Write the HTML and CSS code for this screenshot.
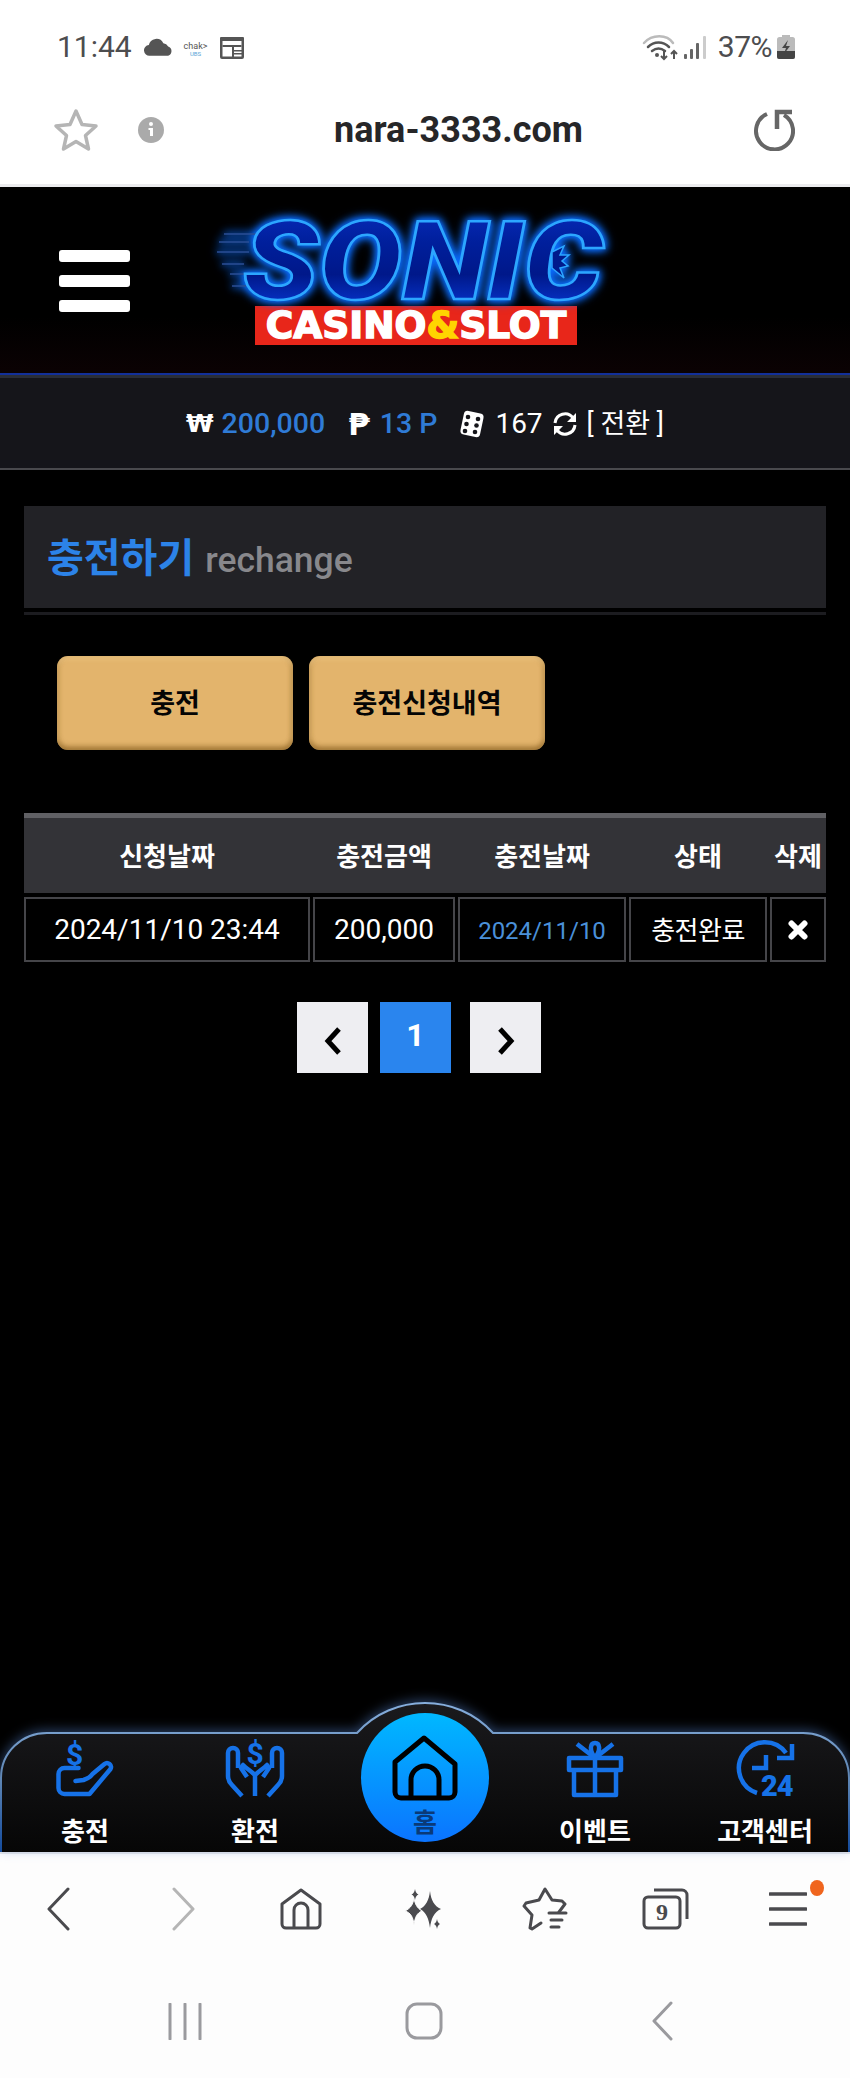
FILE: index.html
```html
<!DOCTYPE html>
<html lang="ko">
<head>
<meta charset="utf-8">
<title>충전하기</title>
<link rel="stylesheet" href="styles.css">
</head>
<body>
<div class="phone">
  <div class="status">
    <div class="status-left">
      <span class="clock">11:44</span>
      <svg class="ic-cloud" viewBox="0 0 30 18"><path d="M6 18a5.5 5.5 0 0 1-1-11 8 8 0 0 1 15-2 6.5 6.5 0 0 1 5 3.500 5 5 0 0 1 0 9.500z" fill="#555"/></svg>
      <span class="chak"><span class="chak-a">chak&gt;</span><span class="chak-b">UBS</span></span>
      <svg class="ic-cal" viewBox="0 0 26 24"><path d="M2 2h22a1 1 0 0 1 1 1v19a2 2 0 0 1-2 2H3a2 2 0 0 1-2-2V3a1 1 0 0 1 1-1z" fill="#555"/><rect x="3.500" y="6" width="19" height="15.500" fill="#fff"/><rect x="3.500" y="10" width="19" height="2" fill="#555"/><rect x="13" y="11" width="2" height="11" fill="#555"/><rect x="15" y="15" width="8" height="1.500" fill="#555"/><rect x="15" y="18" width="8" height="1.500" fill="#555"/></svg>
    </div>
    <div class="status-right">
      <svg class="ic-wifi" viewBox="0 0 36 27"><g fill="none" stroke-linecap="round"><path d="M2 9C10 0 25 0 31 9" stroke="#bbb" stroke-width="2.500"/><path d="M6 13c6-6 15-6 21 0" stroke="#555" stroke-width="2.500"/><path d="M10 17c4-3 9-3 13 0" stroke="#555" stroke-width="2.500"/></g><circle cx="15" cy="21" r="2" fill="#555"/><path d="M22 16v9m-3-3 3 3 3-3M32 25v-8m-3 3 3-3 3 3" fill="none" stroke="#555" stroke-width="2"/></svg>
      <svg class="ic-signal" viewBox="0 0 22 23"><g fill="#666"><rect x="0" y="18" width="3" height="5" rx="1"/><rect x="6" y="13" width="3" height="10" rx="1"/><rect x="12" y="7" width="3" height="16" rx="1"/></g><rect x="19" y="0" width="3" height="23" rx="1" fill="#ccc"/></svg>
      <span class="pct">37%</span>
      <svg class="ic-batt" viewBox="0 0 18 24"><rect x="5" y="0" width="8" height="3" fill="#bbb"/><rect x="0" y="2" width="18" height="22" rx="2.500" fill="#bbb"/><path d="M0 16h18v6a2 2 0 0 1-2 2H2a2 2 0 0 1-2-2z" fill="#444"/><path d="M11 5 5 13h4l-2 6 6-8H9z" fill="#444"/></svg>
    </div>
  </div>

  <div class="address">
    <svg class="ic-star" viewBox="0 0 46 44"><path d="M23 3l6 13.500 14 1.500-10.500 9.500L35.500 41 23 33.500 10.500 41l3-13.500L3 18l14-1.500z" fill="none" stroke="#b5b5b5" stroke-width="3.500" stroke-linejoin="round"/></svg>
    <svg class="ic-info" viewBox="0 0 26 26"><circle cx="13" cy="13" r="13" fill="#aaa"/><circle cx="13" cy="7" r="2" fill="#fff"/><path d="M10.500 11H15v8h-3v-6h-1.500z" fill="#fff"/></svg>
    <span class="url">nara-3333.com</span>
    <svg class="ic-reload" viewBox="0 0 42 42"><path d="M14 5A18.500 18.500 0 1 0 31 6" fill="none" stroke="#666" stroke-width="4"/><path d="M24 20V3h15" fill="none" stroke="#666" stroke-width="4.500"/></svg>
  </div>

  <header class="site-header">
    <button class="burger" aria-label="메뉴"><span></span><span></span><span></span></button>
    <div class="logo">
      <svg class="logo-art" viewBox="0 0 400 100">
        <defs>
          <linearGradient id="logoFill" x1="0" y1="0" x2="0" y2="1">
            <stop offset="0" stop-color="#0a2fc4"/><stop offset=".35" stop-color="#001f9c"/><stop offset=".6" stop-color="#00188a"/><stop offset="1" stop-color="#0a44f0"/>
          </linearGradient>
        </defs>
        <g stroke="#2b4f96" stroke-width="1.500"><path d="M14 28h32M9 36h30M7 46h32M12 58h22M20 68h16M22 80h14"/></g>
        <text class="logo-sonic" x="33" y="93" textLength="360" lengthAdjust="spacingAndGlyphs" fill="url(#logoFill)" stroke="#2ca6ff" stroke-width="2.500">SONIC</text>
        <path d="M342 46l12-6-4 9 9 0-7 6 6 5-8 2 4 10-12-10z" fill="#001a8c" stroke="#2ca6ff" stroke-width="1.500"/>
      </svg>
      <div class="logo-band">CASINO<span class="amp">&amp;</span>SLOT</div>
    </div>
  </header>

  <div class="balance">
    <span class="sym">₩</span><span class="money b1">200,000</span>
    <span class="sym s2">₱</span><span class="money b2">13 P</span>
    <svg class="ic-dice" viewBox="0 0 26 28"><rect x="3" y="2" width="20" height="24" rx="4" transform="rotate(12 13 14)" fill="#fff"/><g fill="#15151a"><circle cx="9" cy="7" r="2.300"/><circle cx="7.500" cy="14" r="2.300"/><circle cx="6" cy="21" r="2.300"/><circle cx="19" cy="9" r="2.300"/><circle cx="17.500" cy="15.500" r="2.300"/><circle cx="16" cy="22" r="2.300"/></g></svg>
    <span class="plain">167</span>
    <svg class="ic-sync" viewBox="0 0 26 26"><g fill="none" stroke="#fff" stroke-width="3"><path d="M3 12a10 10 0 0 1 18-5"/><path d="M23 14a10 10 0 0 1-18 5"/></g><path d="M24 2v9h-9zM2 24v-9h9z" fill="#fff"/></svg>
    <span class="plain conv">[ 전환 ]</span>
  </div>

  <main class="content">
    <div class="title-box">
      <h1 class="title">충전하기 <span class="title-sub">rechange</span></h1>
    </div>
    <div class="tabs">
      <button class="tab">충전</button>
      <button class="tab">충전신청내역</button>
    </div>
    <div class="table">
      <div class="thead">
        <span>신청날짜</span><span>충전금액</span><span>충전날짜</span><span>상태</span><span>삭제</span>
      </div>
      <div class="tbody">
        <span class="cell">2024/11/10 23:44</span>
        <span class="cell">200,000</span>
        <span class="cell date">2024/11/10</span>
        <span class="cell status-cell">충전완료</span>
        <span class="cell"><svg class="ic-x" viewBox="0 0 20 20"><path d="M3.500 3.500l13 13m0-13l-13 13" stroke="#fff" stroke-width="6" stroke-linecap="round"/></svg></span>
      </div>
    </div>
    <div class="pager">
      <button class="page"><svg class="ic-chev" viewBox="0 0 20 30"><path d="M16 3 5 15l11 12" fill="none" stroke="#000" stroke-width="5"/></svg></button>
      <button class="page on">1</button>
      <button class="page next"><svg class="ic-chev" viewBox="0 0 20 30"><path d="M4 3l11 12L4 27" fill="none" stroke="#000" stroke-width="5"/></svg></button>
    </div>
  </main>

  <nav class="dock">
    <svg class="dock-bg" viewBox="0 0 850 150">
      <defs>
        <linearGradient id="dockFill" x1="0" y1="0" x2="0" y2="1"><stop offset="0" stop-color="#1a1a1d"/><stop offset="1" stop-color="#060606"/></linearGradient>
        <linearGradient id="dockLine" x1="0" y1="0" x2="0" y2="1"><stop offset="0" stop-color="#86aedc"/><stop offset=".5" stop-color="#5f86b4"/><stop offset="1" stop-color="#134a9c"/></linearGradient>
      </defs>
      <path d="M1 150V76C1 50 22 31 47 31H357C375 11 400 1 425 1S475 11 493 31H803C828 31 849 50 849 76V150Z" fill="url(#dockFill)"/>
      <path d="M1 150V76C1 50 22 31 47 31H357C375 11 400 1 425 1S475 11 493 31H803C828 31 849 50 849 76V150" fill="none" stroke="url(#dockLine)" stroke-width="2"/>
    </svg>
    <a class="dock-item">
      <svg class="dock-ic" viewBox="0 0 57 57"><g fill="none" stroke="#1672e8" stroke-width="4.500" stroke-linejoin="round" stroke-linecap="round"><path d="M22 28H8a6 6 0 0 0-6 6v14a6 6 0 0 0 6 6h25l21-25a4 4 0 0 0-6-5L36 34c-2 3-6 5-9 6l-8 1"/></g><text class="ic-dollar" x="18" y="25" text-anchor="middle">$</text></svg>
      <span class="dock-label">충전</span>
    </a>
    <a class="dock-item">
      <svg class="dock-ic" viewBox="0 0 58 57"><g fill="none" stroke="#1672e8" stroke-width="4.500" stroke-linejoin="round"><path d="M16 56 6 45c-3-3-4-5-4-9V13a5 5 0 0 1 10 0v15"/><path d="M42 56l10-11c3-3 4-5 4-9V13a5 5 0 0 0-10 0v15"/><path d="M29 56V35"/><path d="M29 35c-3-3-9-7-12-10l-2 3 6 9"/><path d="M29 35c3-3 9-7 12-10l2 3-6 9"/></g><text class="ic-dollar" x="29" y="24" text-anchor="middle">$</text></svg>
      <span class="dock-label">환전</span>
    </a>
    <a class="dock-item dock-home">
      <span class="home-disc">
        <svg class="home-ic" viewBox="0 0 66 66"><g fill="none" stroke="#000" stroke-width="5" stroke-linejoin="round"><path d="M3 27 32 3l31 26v28a6 6 0 0 1-6 6H9a6 6 0 0 1-6-6z"/><path d="M19 63V45a14 14 0 0 1 28 0v18"/></g></svg>
        <span class="home-label">홈</span>
      </span>
    </a>
    <a class="dock-item">
      <svg class="dock-ic" viewBox="0 0 56 57"><g fill="none" stroke="#1672e8" stroke-width="4.500" stroke-linejoin="round"><path d="M2 18h52v12H2z"/><path d="M7 30v25h42V30"/><path d="M28 18v37"/><path d="M10 4l18 14L46 4"/><path d="M28 18c-6-8-5-15 0-15s6 7 0 15z"/></g></svg>
      <span class="dock-label">이벤트</span>
    </a>
    <a class="dock-item">
      <svg class="dock-ic" viewBox="0 0 58 57"><g fill="none" stroke="#1672e8" stroke-width="4.500"><path d="M50 13A26 26 0 1 0 21 53"/><path d="M56 4v14H41"/><path d="M30 15v13H16"/></g><text class="ic-24" x="25" y="56">24</text></svg>
      <span class="dock-label">고객센터</span>
    </a>
  </nav>

  <div class="toolbar">
    <span class="tool"><svg class="t-chev" viewBox="0 0 24 44"><path d="M22 2 3 22l19 20" fill="none" stroke="#4a4a4e" stroke-width="3" stroke-linecap="round" stroke-linejoin="round"/></svg></span>
    <span class="tool tool-fwd"><svg class="t-chev" viewBox="0 0 24 44"><path d="M2 2l19 20L2 42" fill="none" stroke="#b5b5b5" stroke-width="3" stroke-linecap="round" stroke-linejoin="round"/></svg></span>
    <span class="tool"><svg class="t-home" viewBox="0 0 42 42"><g fill="none" stroke="#4a4a4e" stroke-width="3" stroke-linejoin="round"><path d="M2 16 21 2l19 14v20a4 4 0 0 1-4 4H6a4 4 0 0 1-4-4z"/><path d="M14 40V22a7 7 0 0 1 14 0v18"/></g></svg></span>
    <span class="tool"><svg class="t-spark" viewBox="0 0 36 40"><g fill="#4a4a4e"><path d="M25 2c1 9 4 15 11 18-7 3-10 10-11 19-1-9-4-16-10-19 6-3 9-9 10-18z"/><path d="M9 9c1 6 3 10 8 13-5 2-7 6-8 14C8 28 6 24 0 22c6-3 8-7 9-13z" stroke="#fdfdfd" stroke-width="1"/><path d="M10 0c.5 3 1.500 4.500 3.500 5.500C11.500 6.500 10.500 8 10 11 9.500 8 8.500 6.500 6.500 5.500 8.500 4.500 9.500 3 10 0z"/><path d="M32 30c.5 3 1.500 4 3 5-1.500 1-2.500 2-3 5-.5-3-1.500-4-3-5 1.500-1 2.500-2 3-5z"/></g></svg></span>
    <span class="tool"><svg class="t-starl" viewBox="0 0 46 44"><g fill="none" stroke="#4a4a4e" stroke-width="3" stroke-linejoin="round" stroke-linecap="round"><path d="M37 25l6-8-3-3-10-1-7-11-6 11L4 16l-2 3 8 9-2 13 2 1 9-6"/><path d="M27 26h17M29 33h11M29 40h8"/></g></svg></span>
    <span class="tool"><svg class="t-tabs" viewBox="0 0 48 42"><g fill="none" stroke="#4a4a4e" stroke-width="3" stroke-linejoin="round"><rect x="2" y="9" width="36" height="31" rx="4"/><path d="M12 2h28a5 5 0 0 1 5 5v24"/></g><text class="t-nine" x="20" y="32" text-anchor="middle">9</text></svg></span>
    <span class="tool tool-menu"><svg class="t-menu" viewBox="0 0 38 36"><path d="M1 3h36M1 18h36M1 33h36" stroke="#4a4a4e" stroke-width="3.500" stroke-linecap="round"/></svg><i class="dot"></i></span>
  </div>

  <div class="gesture">
    <span class="slot"><svg class="g-recents" viewBox="0 0 34 37"><path d="M2 1v35M17 1v35M32 1v35" stroke="#9a9a9e" stroke-width="3" stroke-linecap="round"/></svg></span>
    <span class="slot"><svg class="g-home" viewBox="0 0 38 38"><rect x="2" y="2" width="34" height="34" rx="10" fill="none" stroke="#9a9a9e" stroke-width="3"/></svg></span>
    <span class="slot"><svg class="g-back" viewBox="0 0 22 40"><path d="M20 2 3 20l17 18" fill="none" stroke="#9a9a9e" stroke-width="3" stroke-linecap="round" stroke-linejoin="round"/></svg></span>
  </div>
</div>
</body>
</html>
```
FILE: styles.css
```css
* { box-sizing: border-box; }
html, body { margin: 0; padding: 0; background: #000; }
body { font-family: Roboto, "Noto Sans CJK KR", sans-serif; }
svg { display: block; flex: none; }
button { font-family: inherit; border: 0; padding: 0; cursor: pointer; }

.phone { width: 850px; height: 2078px; display: flex; flex-direction: column; overflow: hidden; }

/* Android status bar */
.status { height: 94px; flex: none; background: #fff; display: flex; align-items: center; justify-content: space-between; padding: 0 55px 0 57px; color: #4d4d4f; }
.status-left, .status-right { display: flex; align-items: center; }
.clock { font-size: 30px; line-height: 34px; width: 87px; }
.ic-cloud { width: 29px; height: 18px; }
.chak { width: 23px; margin: 4px 12px 0 11px; display: flex; flex-direction: column; align-items: center; line-height: 1; }
.chak-a { font-size: 9px; color: #555; white-space: nowrap; }
.chak-b { font-size: 6px; color: #57a5d6; }
.ic-cal { width: 26px; height: 24px; }
.ic-wifi { width: 36px; height: 27px; }
.ic-signal { width: 22px; height: 23px; margin-left: 6px; }
.pct { font-size: 30px; line-height: 34px; margin-left: 12px; letter-spacing: -.5px; }
.ic-batt { width: 18px; height: 24px; margin-left: 5px; }

/* Browser address bar */
.address { height: 93px; flex: none; background: #fff; border-bottom: 3px solid #ececee; display: flex; align-items: center; padding: 0 55px 18px 53px; }
.ic-star { width: 46px; height: 44px; }
.ic-info { width: 26px; height: 26px; margin-left: 39px; }
.url { flex: 1; text-align: center; font-size: 36px; line-height: 40px; font-weight: 700; color: #262628; }
.ic-reload { width: 42px; height: 42px; }

/* Site header */
.site-header { height: 188px; flex: none; background: linear-gradient(#000 70%, #0b0203); border-bottom: 2px solid #12309a; box-shadow: 0 3px 0 #2a2e38; display: flex; padding: 63px 0 0 59px; position: relative; }
.burger { width: 71px; height: 62px; display: flex; flex-direction: column; justify-content: space-between; background: none; }
.burger span { height: 12px; border-radius: 3px; background: #fff; }
.logo { width: 400px; margin: -44px 0 0 80px; display: flex; flex-direction: column; }
.logo-art { width: 400px; height: 100px; filter: drop-shadow(0 0 5px #0a6cff) drop-shadow(0 0 3px #0a6cff); overflow: visible; }
.logo-sonic { font-family: Roboto, sans-serif; font-weight: 900; font-style: italic; font-size: 110px; }
.logo-band { width: 322px; height: 39px; margin: 0 0 0 45px; background: #e8261a; color: #fff; font-family: "DejaVu Sans", sans-serif; font-weight: 700; font-size: 37.500px; line-height: 39px; text-align: center; -webkit-text-stroke: 1.5px #fff; white-space: nowrap; }
.amp { color: #ffd400; -webkit-text-stroke: 1.5px #ffd400; }

/* Balance strip */
.balance { height: 92px; flex: none; margin-top: 3px; padding-top: 2px; background: #15151a; border-bottom: 2px solid #49494d; display: flex; align-items: center; justify-content: center; color: #fff; font-size: 28px; line-height: 34px; white-space: nowrap; }
.sym { font-family: "DejaVu Sans", sans-serif; font-weight: 700; font-size: 25px; }
.money { color: #2f7bd6; font-weight: 500; font-size: 28.500px; }
.b1 { margin-left: 8px; }
.sym.s2 { margin-left: 23px; font-size: 31px; }
.b2 { margin-left: 10px; }
.ic-dice { width: 26px; height: 28px; margin-left: 22px; }
.plain { margin-left: 10px; }
.ic-sync { width: 26px; height: 26px; margin-left: 9px; }
.plain.conv { font-size: 27px; margin-left: 9px; }

/* Main content */
.content { flex: 1; padding: 36px 24px 0; background: #000; min-height: 0; }
.title-box { height: 109px; padding: 0 23px 2px; display: flex; align-items: center; background: linear-gradient(#222226 102px, #000 102px, #000 106px, #1c1c20 106px); }
.title { margin: 0; font-size: 40px; line-height: 48px; font-weight: 700; color: #2c83e8; white-space: nowrap; }
.title-sub { font-size: 35.500px; font-weight: 500; color: #88888c; margin-left: 1px; }

.tabs { display: flex; gap: 16px; margin: 41px 0 0 33px; }
.tab { width: 236px; height: 94px; border-radius: 11px; padding-bottom: 3px; background: #e3b46c; box-shadow: inset 0 3px 4px rgba(255, 225, 170, .35), inset 0 -4px 5px rgba(120, 80, 20, .5), inset 3px 0 4px rgba(120, 80, 20, .12), inset -3px 0 4px rgba(120, 80, 20, .2); color: #050505; font-size: 27px; font-weight: 700; }

.table { margin-top: 63px; }
.thead, .tbody { display: grid; grid-template-columns: 286px 142px 168px 138px 56px; column-gap: 3px; }
.thead { height: 80px; border-top: 5px solid #606064; padding-bottom: 3px; background: #333337; color: #fff; font-size: 26px; font-weight: 700; align-items: center; text-align: center; }
.tbody { margin-top: 4px; height: 65px; }
.cell { display: flex; align-items: center; justify-content: center; border: 2px solid #454549; color: #fff; font-size: 28px; white-space: nowrap; }
.cell.date { color: #4a90d9; font-size: 24px; padding-top: 3px; }
.status-cell { font-size: 26px; letter-spacing: -.5px; padding-bottom: 3px; }
.ic-x { width: 20px; height: 20px; }

.pager { display: flex; gap: 12px; margin: 40px 0 0 273px; }
.page { width: 71px; height: 71px; background: #eeeef2; display: flex; align-items: center; justify-content: center; color: #fff; font-size: 32px; font-weight: 700; }
.page.on { background: #2a85ee; padding-bottom: 6px; }
.page.next { margin-left: 7px; }
.ic-chev { width: 20px; height: 30px; margin-top: 6px; }

/* Bottom dock */
.dock { height: 150px; flex: none; display: flex; position: relative; background: #000; }
.dock-bg { position: absolute; left: 0; top: 0; width: 850px; height: 150px; overflow: visible; filter: drop-shadow(0 -2px 6px rgba(90, 140, 220, .45)); }
.dock-item { width: 170px; position: relative; display: flex; flex-direction: column; align-items: center; padding-top: 38px; }
.dock-ic { width: 58px; height: 57px; overflow: visible; }
.ic-dollar { font-size: 30px; font-weight: 700; fill: #1672e8; font-family: Roboto, sans-serif; }
.ic-24 { font-size: 29px; font-weight: 900; fill: #1672e8; font-family: Roboto, sans-serif; letter-spacing: -1px; }
.dock-label { margin-top: 18px; font-size: 26px; line-height: 34px; font-weight: 700; color: #fff; white-space: nowrap; }
.dock-home { padding-top: 11px; }
.home-disc { width: 128px; height: 129px; border-radius: 50%; background: linear-gradient(#00b8ff, #0b74ff); display: flex; flex-direction: column; align-items: center; padding-top: 22px; }
.home-ic { width: 66px; height: 66px; }
.home-label { margin-top: 7px; font-size: 26px; line-height: 30px; font-weight: 700; color: #0a3a78; }

/* Browser toolbar */
.toolbar { height: 112px; flex: none; background: #fdfdfd; border-top: 2px solid #e6e6e8; display: flex; align-items: center; justify-content: space-between; padding: 0 37px 0 33px; }
.tool { width: 50px; display: flex; justify-content: center; position: relative; }
.tool-fwd { padding-left: 8px; }
.t-chev { width: 24px; height: 44px; }
.t-home { width: 42px; height: 42px; }
.t-spark { width: 36px; height: 40px; }
.t-starl { width: 46px; height: 44px; }
.t-tabs { width: 48px; height: 42px; }
.t-nine { font-family: "Liberation Serif", serif; font-weight: 700; font-size: 24px; fill: #4a4a4e; }
.t-menu { width: 38px; height: 36px; }
.dot { position: absolute; right: -11px; top: -11px; width: 14px; height: 16px; border-radius: 50%; background: #f0651e; }

/* Android gesture bar */
.gesture { height: 114px; flex: none; background: #fdfdfd; display: flex; align-items: center; justify-content: space-between; padding: 0 163px 0 160px; }
.slot { width: 50px; display: flex; justify-content: center; }
.g-recents { width: 34px; height: 37px; }
.g-home { width: 38px; height: 38px; }
.g-back { width: 22px; height: 40px; }
```
